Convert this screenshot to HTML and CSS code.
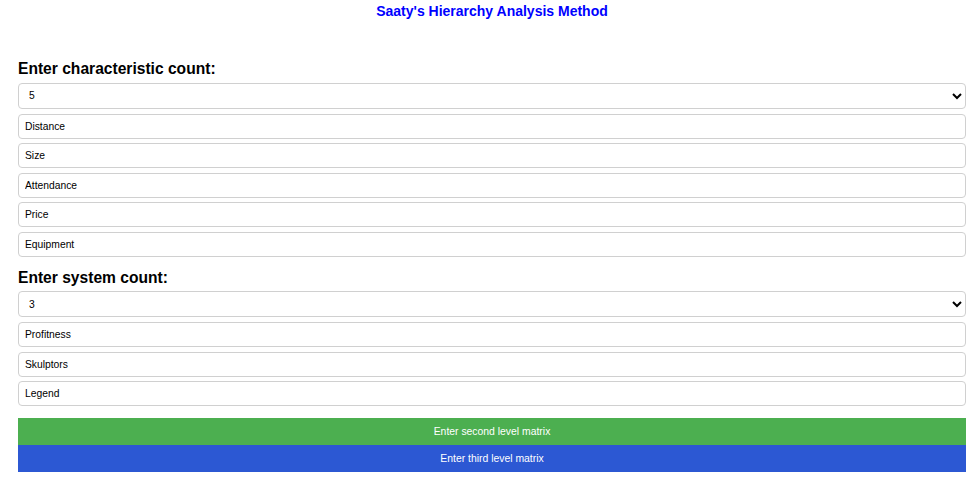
FILE: index.html
```html
<!DOCTYPE html>
<html>
<head>
<meta charset="utf-8">
<title>Saaty's Hierarchy Analysis Method</title>
<link rel="stylesheet" href="styles.css">
</head>
<body>
<div class="page">
  <h1 class="title">Saaty's Hierarchy Analysis Method</h1>
  <h2 class="heading first">Enter characteristic count:</h2>
  <div class="fields">
    <select class="field select"><option>5</option></select>
    <input class="field" type="text" value="Distance">
    <input class="field" type="text" value="Size">
    <input class="field" type="text" value="Attendance">
    <input class="field" type="text" value="Price">
    <input class="field" type="text" value="Equipment">
  </div>
  <h2 class="heading second">Enter system count:</h2>
  <div class="fields">
    <select class="field select"><option>3</option></select>
    <input class="field" type="text" value="Profitness">
    <input class="field" type="text" value="Skulptors">
    <input class="field" type="text" value="Legend">
  </div>
  <div class="actions">
    <button class="btn green">Enter second level matrix</button>
    <button class="btn blue">Enter third level matrix</button>
  </div>
</div>
</body>
</html>
```
FILE: styles.css
```css
html, body {
  margin: 0;
  padding: 0;
  background: #fff;
}
body {
  font-family: "Liberation Sans", Arial, sans-serif;
  color: #000;
}
.page {
  padding: 0 8px 0 18px;
}
.title {
  margin: 0;
  padding-top: 3px;
  text-align: center;
  color: #0000ff;
  font-size: 14px;
  line-height: 17px;
  font-weight: bold;
}
.heading {
  margin: 0;
  font-size: 15.6px;
  line-height: 18px;
  font-weight: bold;
  padding-bottom: 4.5px;
}
.heading.first {
  margin-top: 40px;
}
.heading.second {
  margin-top: 12px;
}
.fields {
  display: flex;
  flex-direction: column;
  gap: 4.5px;
}
.field {
  box-sizing: border-box;
  width: 100%;
  height: 25px;
  margin: 0;
  border: 1px solid #d0d0d0;
  border-radius: 4px;
  padding: 0 6px;
  font-family: "Liberation Sans", Arial, sans-serif;
  font-size: 10.3px;
  color: #000;
  background: #fff;
}
.select {
  height: 26px;
  padding-left: 6px;
  margin-bottom: 0.5px;
}
.actions {
  margin-top: 12px;
  display: flex;
  flex-direction: column;
}
.btn {
  display: block;
  width: 100%;
  height: 27px;
  border: none;
  margin: 0;
  padding: 0;
  color: #fff;
  font-family: "Liberation Sans", Arial, sans-serif;
  font-size: 10.4px;
  cursor: pointer;
}
.green { background: #4caf50; }
.blue { background: #2c58d3; }
```
